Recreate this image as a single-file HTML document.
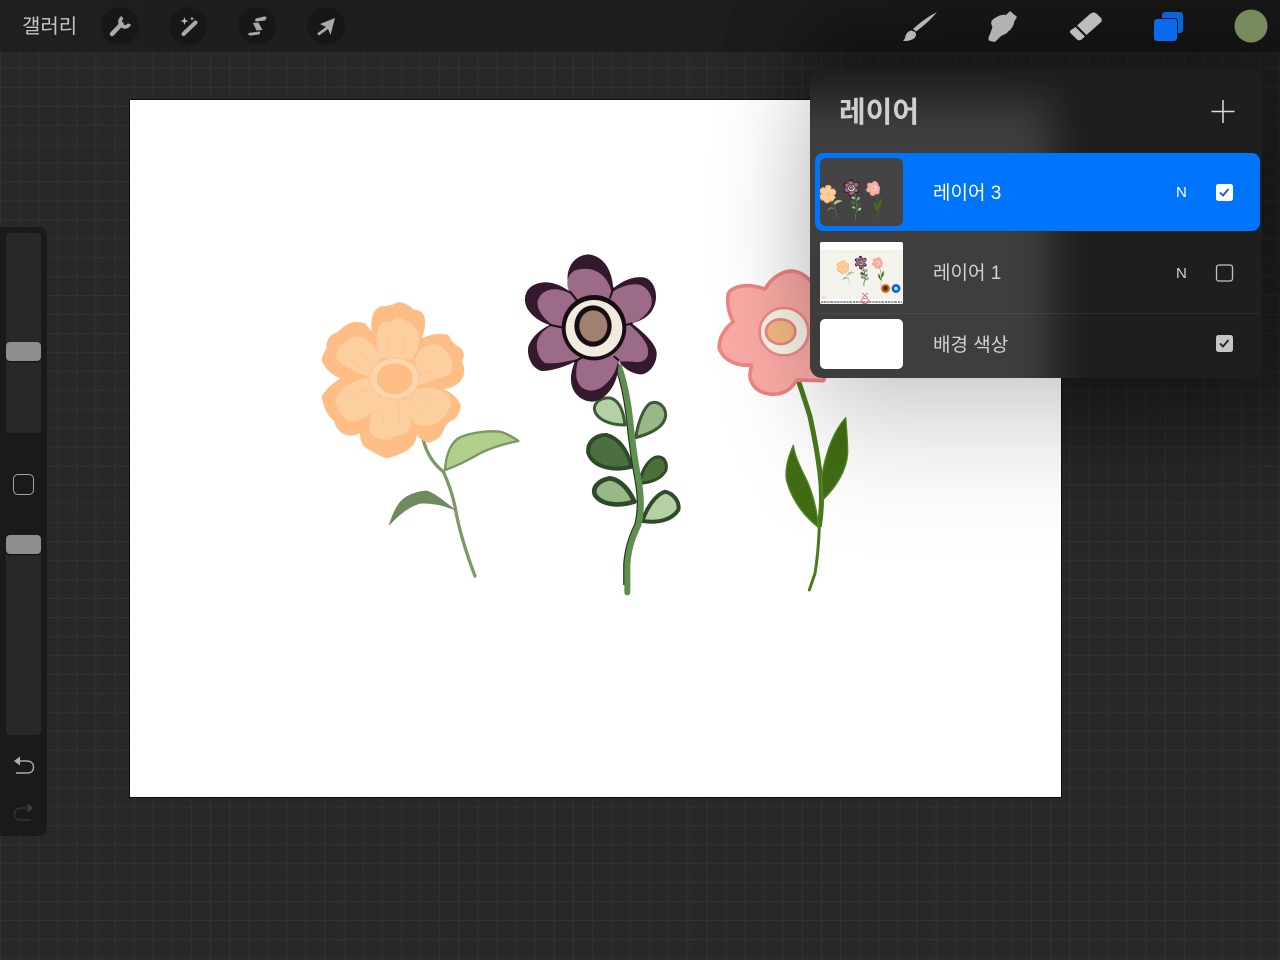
<!DOCTYPE html>
<html lang="ko">
<head>
<meta charset="utf-8">
<title>레이어</title>
<style>
html,body{margin:0;padding:0;width:1280px;height:960px;overflow:hidden;background:#282828}
body{position:relative;font-family:"Liberation Sans","Noto Sans CJK KR",sans-serif}
.abs{position:absolute}
#grid{left:0;top:0;width:1280px;height:960px;background-color:#282828;
background-image:linear-gradient(to right,#323232 1px,transparent 1px),linear-gradient(to bottom,#323232 1px,transparent 1px);
background-size:19.1px 18.95px;background-position:0 11px}
#canvas{left:130px;top:100px;width:931px;height:697px;background:#fff;outline:1px solid #0c0c0c}
#topbar{left:0;top:0;width:1280px;height:52px;background:linear-gradient(to right,#1f1f1f,#1d1d1d 60%,#1b1b1b)}
#panel{left:810px;top:70px;width:452px;height:308px;background:#1e1e1e;border-radius:12px;overflow:hidden}
#panelglow{left:-40px;top:30px;width:282px;height:320px;background:#fff;opacity:.14;filter:blur(20px)}
#row1{left:5px;top:83px;width:445px;height:78px;background:#0074fb;border-radius:8px}
#sep{left:5px;top:243px;width:445px;height:1px;background:rgba(255,255,255,.07)}
.t{position:absolute;white-space:nowrap;line-height:1}
#bar{left:0;top:227px;width:47px;height:609px;background:#1a1a1a;border-radius:0 8px 8px 0}
.track{position:absolute;left:6px;width:35px;background:#282828;border-radius:4px}
.thumb{position:absolute;left:6px;width:35px;height:19px;background:#8e8e8e;border-radius:4px;box-shadow:0 1px 1px #111}
</style>
</head>
<body>
<div class="abs" id="grid"></div>
<div class="abs" id="canvas"></div>

<svg class="abs" style="left:0;top:0" width="1280" height="960" viewBox="0 0 1280 960" fill="none">
<defs>
<g id="flowers">
 <!-- orange flower -->
 <g transform="translate(310 290) scale(.33333)">
  <path d="M340 450Q355 510 400 545Q425 600 435 650Q450 740 495 858" stroke="#7d9a64" stroke-width="10" stroke-linecap="round"/>
  <path d="M405 540C408 490 425 455 450 442C490 425 540 422 570 425C595 432 610 442 625 453C580 462 540 475 510 490C475 510 440 528 405 540Z" fill="#afcf8a" stroke="#7a9663" stroke-width="7" stroke-linejoin="round"/>
  <path d="M238 705C250 665 265 635 290 620C315 607 335 603 350 603C375 610 410 640 435 660C400 645 365 638 330 640C295 650 265 675 238 705Z" fill="#708a5d" stroke="#708a5d" stroke-width="2"/>
  <path d="M185 125Q178 60 215 48Q240 50 265 36Q295 40 310 58Q345 60 345 95Q345 125 335 145Q380 125 415 135Q430 165 450 172Q470 190 455 215Q475 250 445 280Q425 295 400 297Q440 315 452 345Q450 380 425 392Q410 400 405 410Q395 450 355 458Q330 450 320 435Q320 470 275 490Q250 500 230 505Q200 495 180 480Q150 470 150 430Q115 445 90 425Q75 410 72 392Q45 375 35 320Q50 290 92 265Q50 250 35 210Q40 185 50 175Q45 140 85 125Q120 85 165 100Q175 110 185 125Z" fill="#fdbd85"/>
  <g fill="#fdcf9e" stroke="#fdcf9e" stroke-width="7" stroke-linejoin="round">
   <path d="M215 200C195 150 200 110 225 98L240 100L262 85C285 95 305 100 315 120C335 150 320 180 305 205Z"/>
   <path d="M318 210C325 185 345 170 370 165C390 165 400 180 410 190C425 205 425 235 420 248C390 262 355 272 330 280Z"/>
   <path d="M325 300C360 290 395 300 415 320C425 345 410 375 385 392C360 408 330 405 318 398C295 370 290 345 290 325Z"/>
   <path d="M215 325C195 350 180 390 180 420C190 440 215 445 235 448L255 435C280 435 300 420 300 400C300 370 290 345 280 330Z"/>
   <path d="M175 268C135 270 95 295 78 330C85 360 100 375 115 390C150 395 190 370 210 330C200 310 190 290 175 268Z"/>
   <path d="M175 258C135 240 100 225 82 205C82 180 95 165 105 160C125 135 155 140 170 155C190 170 205 190 210 205C195 220 180 240 175 258Z"/>
  </g>
  <g stroke="#fcc28c" stroke-width="2.500" stroke-linecap="round" fill="none">
   <path d="M238 135Q232 165 238 195M285 140Q285 170 275 198M315 222Q335 218 348 208M328 250L370 245M325 300Q350 325 372 348M300 325Q315 360 335 370M265 335L268 400M215 360L220 405M115 315Q150 300 180 298M150 190Q170 205 178 220M120 210Q150 235 175 248"/>
  </g>
  <ellipse cx="254" cy="266" rx="74" ry="62" fill="#fad6ae" stroke="#fcc48f" stroke-width="3"/>
  <ellipse cx="254" cy="266" rx="54" ry="46" fill="#fdbd85"/>
 </g>
 <!-- purple flower -->
 <g transform="translate(515 245) scale(.33333)">
  <g stroke-linejoin="round">
   <path d="M330 540C280 540 240 520 238 490C240 465 270 455 290 460C315 470 325 500 330 540Z" fill="#b4d0a4" stroke="#3d5a35" stroke-width="9"/>
   <path d="M362 578C370 530 385 490 405 475C430 465 452 485 452 510C450 545 410 565 362 578Z" fill="#98b888" stroke="#3d5a35" stroke-width="9"/>
   <path d="M350 665C290 680 235 665 220 625C215 590 245 568 275 570C310 580 335 610 350 665Z" fill="#4b6f41" stroke="#2f4a2a" stroke-width="12"/>
   <path d="M375 715C378 680 395 650 420 637C445 630 458 650 453 675C440 700 410 712 375 715Z" fill="#4d7039" stroke="#2f4a2a" stroke-width="9"/>
   <path d="M358 770C310 785 260 780 240 750C230 725 255 705 285 700C320 705 345 740 358 770Z" fill="#98b888" stroke="#2f4a2a" stroke-width="14"/>
   <path d="M382 828C395 790 420 750 450 740C475 745 495 770 490 795C470 825 430 835 382 828Z" fill="#b4d0a4" stroke="#2f4a2a" stroke-width="12"/>
  </g>
  <path d="M309 365Q332 430 342 520Q352 620 367 700Q382 780 367 840Q337 900 334 960L334 1020" stroke="#25331f" stroke-width="19" fill="none"/>
  <path d="M312 365Q335 430 345 520Q355 620 370 700Q385 780 370 840Q340 900 337 960L337 1042" stroke="#5f8f4e" stroke-width="18" stroke-linecap="round" fill="none"/>
  <path d="M165 140C145 90 165 30 222 28C265 35 290 70 295 130C330 100 375 90 395 100C425 115 435 170 405 205C390 222 365 232 350 235C390 265 425 300 425 325C425 365 395 390 375 388C345 385 320 365 310 345C315 400 285 460 235 470C195 470 165 440 168 395C170 375 175 360 180 350C140 370 105 378 80 378C50 370 35 335 40 305C50 275 80 250 105 240C70 230 30 200 30 165C30 130 55 115 85 112C115 110 145 125 165 140Z" fill="#33182e"/>
  <path d="M178 158C150 120 160 85 190 78C235 68 275 90 287 150C320 125 355 118 378 125C405 140 412 170 400 190C385 215 360 230 335 238C360 260 395 290 395 320C395 345 375 350 350 345L305 345C300 385 270 425 235 432C205 435 188 415 188 385C188 365 192 350 197 335C160 345 120 352 92 350C70 335 65 300 75 280C85 260 105 248 122 240C95 225 70 195 72 170C80 140 110 135 130 138C150 142 165 150 178 158Z" fill="#9b6b88" stroke="#9b6b88" stroke-width="9" stroke-linejoin="round"/>
  <path d="M165 140L185 165M295 130L285 158M350 235L325 242M310 345L298 335M180 350L205 335M105 240L145 248" stroke="#1c0f18" stroke-width="6" stroke-linecap="round"/>
  <ellipse cx="237" cy="248" rx="97" ry="98" fill="#170d12"/>
  <ellipse cx="237" cy="250" rx="85" ry="85" fill="#f1ebdd"/>
  <ellipse cx="234" cy="243" rx="56" ry="62" fill="#170d12"/>
  <ellipse cx="235" cy="243" rx="42" ry="47" fill="#a08071"/>
 </g>
 <!-- pink flower -->
 <g transform="translate(700 260) scale(.33333)">
  <path d="M295 362Q315 420 330 470Q350 560 360 640Q370 720 358 800" stroke="#4b7a1c" stroke-width="15" fill="none"/>
  <path d="M358 800Q355 880 345 940L328 990" stroke="#4b7a1c" stroke-width="9" stroke-linecap="round" fill="none"/>
  <path d="M280 556C255 610 255 650 262 670C280 730 320 775 355 802C350 720 320 660 320 660C300 620 285 590 280 556Z" fill="#3f6d14" stroke="#5a8a2a" stroke-width="4" stroke-linejoin="round"/>
  <path d="M437 473C395 520 375 590 365 650L368 720C410 680 440 630 443 580C443 540 440 510 437 473Z" fill="#3f6d14" stroke="#5a8a2a" stroke-width="4" stroke-linejoin="round"/>
  <path d="M195 88C215 50 250 32 280 33C320 40 345 70 360 120L400 200L385 330L370 362L290 360C270 395 240 405 210 402C170 398 148 370 150 340L155 315C110 320 70 300 58 265C55 235 75 205 100 185C85 160 80 125 85 100C105 72 155 72 195 88Z" fill="#fbaaa4" stroke="#ee8484" stroke-width="11" stroke-linejoin="round"/>
  <ellipse cx="252" cy="215" rx="73" ry="71" fill="#f8f5e8" stroke="#ee8b88" stroke-width="8"/>
  <ellipse cx="242" cy="215" rx="44" ry="37" fill="#f2bb80" stroke="#ec8484" stroke-width="8"/>
 </g>
</g>
</defs>
<use href="#flowers"/>
</svg>

<div class="abs" id="topbar"></div>
<svg class="abs" style="left:0;top:0" width="1280" height="960" viewBox="0 0 1280 960">
 <defs>
  <filter id="sh" filterUnits="userSpaceOnUse" x="0" y="0" width="1280" height="960" color-interpolation-filters="sRGB">
   <feGaussianBlur stdDeviation="48 85"/>
  </filter>
  <filter id="sh2" filterUnits="userSpaceOnUse" x="700" y="-200" width="900" height="1000" color-interpolation-filters="sRGB">
   <feGaussianBlur stdDeviation="40"/>
  </filter>
  <clipPath id="offcanvas"><rect x="1062" y="0" width="218" height="960"/><rect x="700" y="0" width="400" height="99"/></clipPath>
 </defs>
 <rect x="810" y="70" width="452" height="308" fill="#000" opacity=".34" filter="url(#sh)"/>
 <g clip-path="url(#offcanvas)"><rect x="800" y="20" width="560" height="410" fill="#000" opacity=".3" filter="url(#sh2)"/></g>
</svg>

<div class="t" style="left:22px;top:17px;font-size:20px;color:#c6c6c6">갤러리</div>

<svg class="abs" style="left:0;top:0" width="1280" height="60" viewBox="0 0 1280 60" fill="none">
 <circle cx="120" cy="26" r="19" fill="#171717"/>
 <circle cx="188.500" cy="26" r="19" fill="#171717"/>
 <circle cx="257" cy="26" r="19" fill="#171717"/>
 <circle cx="326" cy="26" r="19" fill="#171717"/>
 <!-- wrench -->
 <path d="M112 34L121.500 24" stroke="#aaa" stroke-width="4.500" stroke-linecap="round"/>
 <path d="M122.500 17.500A5 5 0 1 0 129.500 24" stroke="#aaa" stroke-width="3.600"/>
 <!-- wand -->
 <path d="M183.500 34L195.500 22.500" stroke="#aaa" stroke-width="4" stroke-linecap="round"/>
 <path d="M184.500 17L185.500 20L188.500 21L185.500 22L184.500 25L183.500 22L180.500 21L183.500 20ZM192 16.500L192.600 18L194 18.600L192.600 19.200L192 20.700L191.400 19.200L190 18.600L191.400 18Z" fill="#bbb"/>
 <!-- selection S -->
 <path d="M256 18.500L264 16.500Q267 16.500 266.500 18L265 20.500L256 21.500Q254 20 256 18.500ZM253 23L258.500 22.500L262.500 30L256.500 30.500ZM248.500 33L259.500 31.500Q261 33 259 34.500L251 35.500Q247.500 35.500 248.500 33Z" fill="#a8a8a8"/>
 <!-- arrow -->
 <path d="M335 18L320 24L326 27L317 33.500L319 35.500L328 29L330.500 35Z" fill="#aaa"/>
 <!-- brush -->
 <path d="M937 12Q925 18 913 29L916 31.500Q929 22 937 12ZM911.500 30.500Q907 31 905.500 36Q905 39 903 41Q911 41.500 915 37.500Q917 34 915 32Z" fill="#b6b6b6"/>
 <!-- smudge -->
 <path d="M1010 11L1017 17L1014.500 21Q1014 27 1007 33L1001 36L995 42L990 41Q987 40 990 34L992.500 27Q989 21 995 18Q1001 14 1006 15Z" fill="#b2b2b2"/>
 <path d="M1001 37Q1006 36 1009 31" stroke="#1a1a1a" stroke-width="1"/>
 <!-- eraser -->
 <path d="M1077 25.500L1090 14Q1094 11 1097 14L1101 18Q1103 21 1100 23L1086.500 35Z" fill="#bcbcbc"/>
 <path d="M1075.500 27L1085 36.500L1081 40Q1079 41 1077 39.500L1070.500 33Q1069 31 1071 30Z" fill="#bcbcbc"/>
 <!-- layers -->
 <rect x="1162" y="12" width="21" height="21" rx="3" fill="#0a66dc"/>
 <rect x="1153.500" y="18.500" width="24" height="23" rx="3.500" fill="#0a6bf0" stroke="#141414" stroke-width="1"/>
 <circle cx="1251" cy="26" r="16.500" fill="#7a8a5f"/>
</svg>

<div class="abs" id="panel">
 <div class="abs" id="panelglow"></div>
 <div class="abs" id="row1"></div>
 <div class="abs" id="sep"></div>
 <div class="t" style="left:29px;top:29px;font-size:29px;font-weight:700;color:#cfcfcf">레이어</div>
 <div class="t" style="left:123px;top:114px;font-size:19px;color:#fff">레이어 3</div>
 <div class="t" style="left:123px;top:194px;font-size:19px;color:#d2d2d2">레이어 1</div>
 <div class="t" style="left:123px;top:266px;font-size:19px;color:#d2d2d2">배경 색상</div>
 <div class="t" style="left:366px;top:115px;font-size:15px;color:#fff">N</div>
 <div class="t" style="left:366px;top:196px;font-size:15px;color:#d2d2d2">N</div>
</div>

<svg class="abs" style="left:0;top:0" width="1280" height="960" viewBox="0 0 1280 960" fill="none">
 <defs>
  <clipPath id="c1"><rect x="820" y="158" width="83" height="68" rx="6"/></clipPath>
  <clipPath id="c2"><rect x="820" y="242" width="83" height="62" rx="2"/></clipPath>
 </defs>
 <!-- plus -->
 <path d="M1223 100V123M1211.500 111.500H1234.500" stroke="#ddd" stroke-width="1.500"/>
 <!-- thumb 1 -->
 <rect x="820" y="158" width="83" height="68" rx="6" fill="#444"/>
 <g clip-path="url(#c1)"><use href="#flowers" transform="translate(781 149) scale(.1186)"/></g>
 <!-- thumb 2 -->
 <g clip-path="url(#c2)">
  <rect x="820" y="242" width="83" height="62" fill="#f3f3ec"/>
  <rect x="820" y="242" width="83" height="8" fill="#fff"/>
  <use href="#flowers" transform="translate(807.500 233) scale(.09)"/>
  <circle cx="824" cy="299" r="3" fill="#f5d9d6"/>
  <rect x="820" y="299" width="83" height="5" fill="#fff"/>
  <path d="M821 302H902" stroke="#777" stroke-width="1.600" stroke-dasharray="2 .6 3 .8"/>
  <circle cx="885.500" cy="288.500" r="4.500" fill="#e8640f"/>
  <rect x="883.500" y="286" width="4" height="4.500" fill="#333"/>
  <circle cx="896" cy="288.500" r="4.500" fill="#0a6bc4"/>
  <circle cx="896" cy="288.500" r="1.800" fill="#bcdcff"/>
  <path d="M862 293L868 298M868 293L862 298" stroke="#d94a5a" stroke-width=".8"/>
  <ellipse cx="865" cy="301" rx="4" ry="2.500" stroke="#d94a5a" stroke-width=".7"/>
 </g>
 <!-- thumb 3 -->
 <rect x="820" y="319" width="83" height="50" rx="5" fill="#fff"/>
 <!-- checkboxes -->
 <rect x="1216" y="184" width="17" height="17" rx="2.500" fill="#fff"/>
 <path d="M1220 192.500L1223 195.500L1228.500 189" stroke="#0a5fd0" stroke-width="1.800"/>
 <rect x="1216.500" y="265" width="16" height="16" rx="2.500" stroke="#c4c4c4" stroke-width="1.300"/>
 <rect x="1216" y="335" width="17" height="17" rx="2.500" fill="#c6c6c6"/>
 <path d="M1220 343.500L1223 346.500L1228.500 340" stroke="#222" stroke-width="1.800"/>
</svg>

<div class="abs" id="bar">
 <div class="track" style="top:6px;height:200px"></div>
 <div class="track" style="top:308px;height:200px"></div>
 <div class="thumb" style="top:115px"></div>
 <div class="thumb" style="top:308px"></div>
 <div class="abs" style="left:13px;top:247px;width:19px;height:19px;border:1.300px solid #a5a5a5;border-radius:5px"></div>
</div>

<svg class="abs" style="left:0;top:740px" width="48" height="90" viewBox="0 740 48 90" fill="none">
 <path d="M14 761L20 756.500V765.500Z" fill="#b0b0b0"/>
 <path d="M19 761H27Q33.500 761.500 33.500 767Q33.500 773 27 773H16" stroke="#aaa" stroke-width="1.400"/>
 <path d="M33.500 808L27.500 803.500V812.500Z" fill="#3a3a3a"/>
 <path d="M28 808H21Q14.500 808.500 14.500 814.500Q14.500 820 21 820H31" stroke="#333" stroke-width="1.400"/>
</svg>
</body>
</html>
